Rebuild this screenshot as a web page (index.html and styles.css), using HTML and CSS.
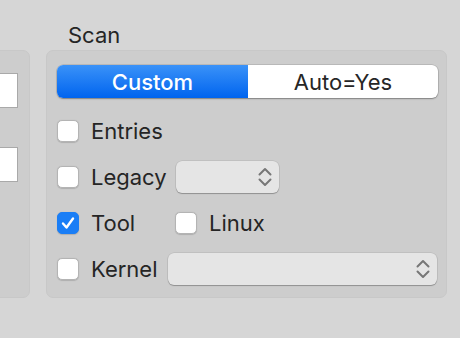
FILE: index.html
```html
<!DOCTYPE html>
<html>
<head>
<meta charset="utf-8">
<link rel="stylesheet" href="styles.css">
</head>
<body>
<div class="page">
  <div class="left-box">
    <div class="field"></div>
    <div class="field"></div>
  </div>
  <div class="group">
    <div class="group-title">Scan</div>
    <div class="box">
      <div class="segmented">
        <div class="seg seg-on">Custom</div>
        <div class="seg">Auto=Yes</div>
      </div>
      <div class="row">
        <div class="cell"><span class="cb"></span><span class="lbl">Entries</span></div>
      </div>
      <div class="row">
        <div class="cell fixed"><span class="cb"></span><span class="lbl">Legacy</span></div>
        <div class="popup small">
          <svg class="chev" width="14" height="20" viewBox="0 0 14 20"><path d="M1.5 7.5 L7 2 L12.5 7.5 M1.5 12.5 L7 18 L12.5 12.5" fill="none" stroke="#777" stroke-width="2" stroke-linecap="round" stroke-linejoin="round"/></svg>
        </div>
      </div>
      <div class="row">
        <div class="cell fixed"><span class="cb on"><svg width="22" height="22" viewBox="0 0 22 22"><path d="M6 11.5 L9.5 15.5 L16 6.5" fill="none" stroke="#fff" stroke-width="2.4" stroke-linecap="round" stroke-linejoin="round"/></svg></span><span class="lbl">Tool</span></div>
        <div class="cell"><span class="cb"></span><span class="lbl">Linux</span></div>
      </div>
      <div class="row">
        <div class="cell"><span class="cb"></span><span class="lbl">Kernel</span></div>
        <div class="popup wide">
          <svg class="chev" width="14" height="20" viewBox="0 0 14 20"><path d="M1.5 7.5 L7 2 L12.5 7.5 M1.5 12.5 L7 18 L12.5 12.5" fill="none" stroke="#777" stroke-width="2" stroke-linecap="round" stroke-linejoin="round"/></svg>
        </div>
      </div>
    </div>
  </div>
</div>
</body>
</html>
```
FILE: styles.css
```css
html, body {
  margin: 0;
  padding: 0;
  background: #d6d6d6;
  width: 460px;
  height: 338px;
  overflow: hidden;
  font-family: Inter, "Liberation Sans", sans-serif;
  color: #252525;
}
.page {
  display: flex;
  align-items: flex-start;
  padding-top: 21px;
}
.left-box {
  margin-top: 29px;
  margin-left: -12px;
  width: 29px;
  height: 224px;
  background: #cdcdcd;
  border: 1px solid #c8c8c8;
  border-radius: 7px;
  display: flex;
  flex-direction: column;
  align-items: flex-end;
  padding-top: 22px;
  padding-right: 11px;
  box-sizing: content-box;
  gap: 39px;
  flex: none;
}
.field {
  width: 30px;
  height: 33px;
  background: #fff;
  border: 1px solid #a9a9a9;
  flex: none;
}
.group {
  margin-left: 16px;
  display: flex;
  flex-direction: column;
}
.group-title {
  font-size: 22px;
  line-height: 29px;
  height: 29px;
  padding-left: 22px;
}
.box {
  width: 389px;
  height: 232px;
  background: #cdcdcd;
  border: 1px solid #c8c8c8;
  border-radius: 7px;
  padding: 14px 0 0 10px;
  box-sizing: content-box;
  display: flex;
  flex-direction: column;
  gap: 14px;
}
.box > * { flex: none; }
.segmented {
  display: flex;
  width: 381px;
  height: 33px;
  border-radius: 6px;
  background: #fff;
  box-shadow: 0 0 0 0.5px rgba(0,0,0,0.18), 0 1px 1.5px rgba(0,0,0,0.3);
  overflow: hidden;
  margin-bottom: 3px;
}
.seg {
  display: flex;
  align-items: center;
  justify-content: center;
  font-size: 22px;
  color: #262626;
}
.seg:first-child { width: 191px; }
.seg:last-child { flex: 1; }
.seg-on {
  background: linear-gradient(#3a92f8, #0064ef);
  color: #fff;
  font-weight: 500;
}
.row {
  display: flex;
  align-items: center;
  height: 32px;
}
.cell {
  display: flex;
  align-items: center;
}
.cell.fixed { width: 118px; }
.cb {
  width: 22px;
  height: 22px;
  box-sizing: border-box;
  background: #fff;
  border: 1px solid #b4b4b4;
  border-radius: 5px;
  box-shadow: 0 0.5px 1px rgba(0,0,0,0.15);
  flex: none;
}
.cb.on {
  background: #1a7ef6;
  border-color: #1a7ef6;
  display: flex;
  align-items: center;
  justify-content: center;
}
.cb.on svg { display: block; margin: -1px; }
.lbl {
  font-size: 22px;
  margin-left: 12px;
}
.popup {
  height: 32px;
  box-sizing: border-box;
  background: #e5e5e5;
  border-radius: 6px;
  box-shadow: 0 0 0 0.5px rgba(0,0,0,0.12), 0 1px 1px rgba(0,0,0,0.25);
  display: flex;
  align-items: center;
  justify-content: flex-end;
  padding-right: 7px;
}
.popup.small { width: 103px; margin-left: 1px; }
.popup.wide { width: 269px; margin-left: 10px; }
.chev { display: block; }
```
